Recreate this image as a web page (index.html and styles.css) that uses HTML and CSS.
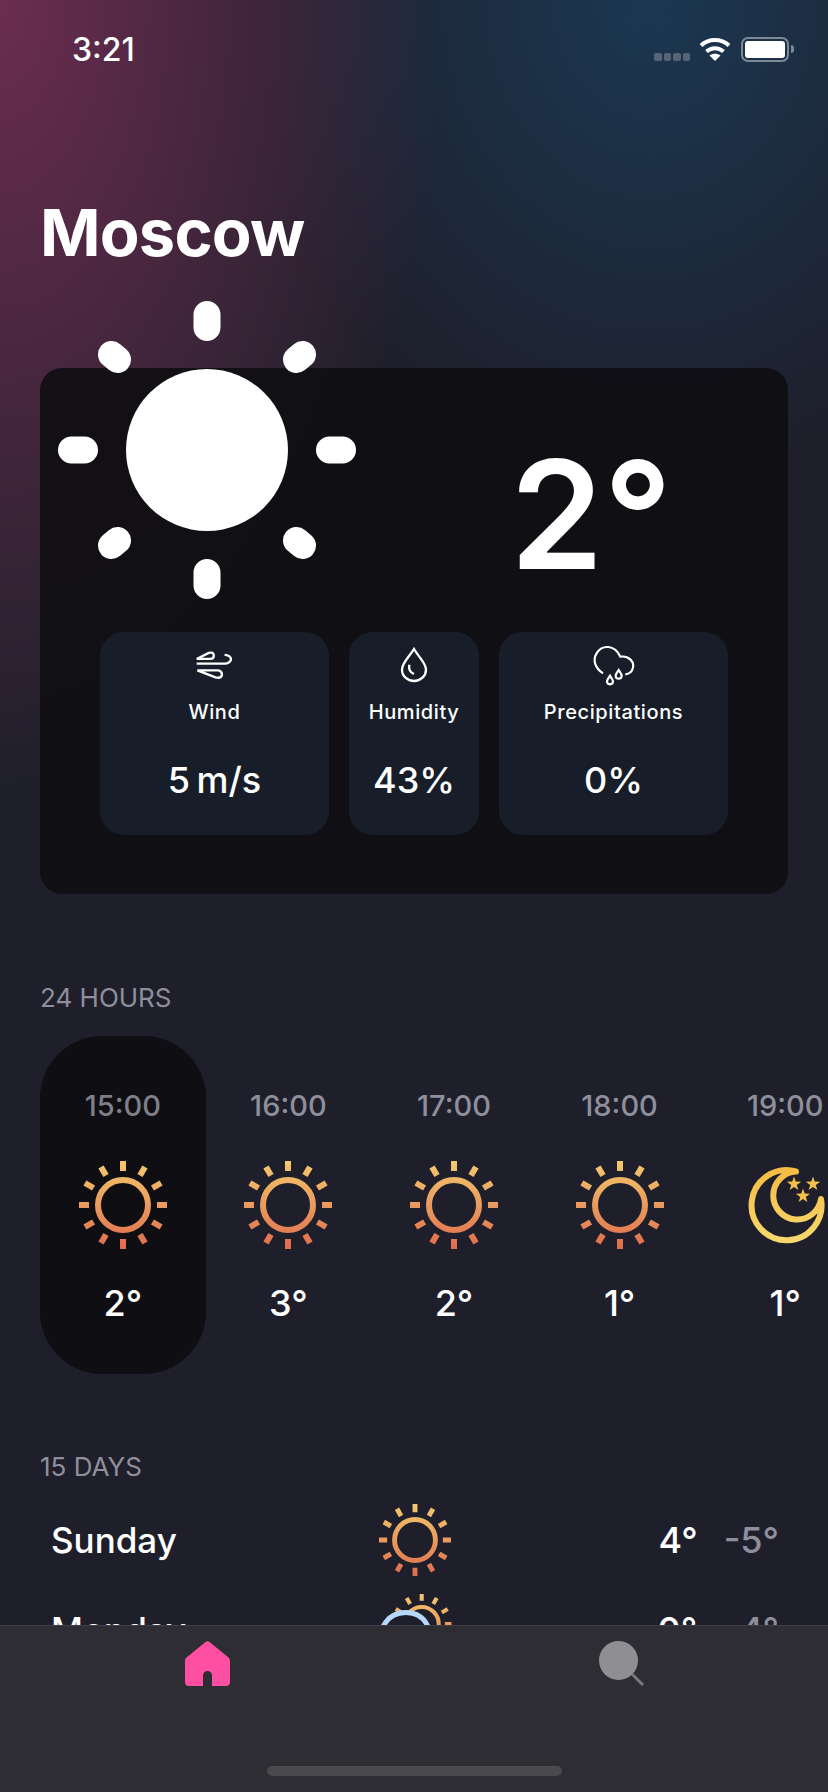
FILE: index.html
```html
<!DOCTYPE html>
<html lang="en">
<head>
    <meta charset="UTF-8">
    <meta name="viewport" content="width=device-width, initial-scale=1.0">
    <title>Moscow</title>
    <link rel="stylesheet" href="styles.css">
</head>
<body>
    <svg class="defs" width="0" height="0">
        <defs>
            <linearGradient id="sun-grad" gradientUnits="userSpaceOnUse" x1="0" y1="0" x2="0" y2="88">
                <stop offset="0" stop-color="#f3c96d"/>
                <stop offset="1" stop-color="#e06c4e"/>
            </linearGradient>
            <linearGradient id="moon-grad" gradientUnits="userSpaceOnUse" x1="0" y1="0" x2="0" y2="76">
                <stop offset="0" stop-color="#f5bb42"/>
                <stop offset="1" stop-color="#f6d86f"/>
            </linearGradient>
            <symbol id="sun" viewBox="0 0 88 88">
                <circle cx="44" cy="44" r="25" fill="none" stroke="url(#sun-grad)" stroke-width="6"/>
                <path fill="none" stroke="url(#sun-grad)" stroke-width="6" d="M44 10V0M61 14.56L66 5.89M73.44 27L82.11 22M78 44H88M73.44 61L82.11 66M61 73.44L66 82.11M44 78V88M27 73.44L22 82.11M14.56 61L5.89 66M10 44H0M14.56 27L5.89 22M27 14.56L22 5.89"/>
            </symbol>
        </defs>
    </svg>

    <div class="screen">
        <div class="content">
            <div class="status">
                <span class="time">3:21</span>
                <div class="status-icons">
                    <div class="signal"><i></i><i></i><i></i><i></i></div>
                    <svg width="32" height="24" viewBox="0 0 32 24">
                        <path fill="none" stroke="#fff" stroke-width="4" d="M2 8.5C10 1.2 22 1.2 30 8.5"/>
                        <path fill="none" stroke="#fff" stroke-width="4" d="M7.5 14.5C12.5 10 19.5 10 24.5 14.5"/>
                        <path fill="#fff" d="M16 24L10.5 18.5C13.5 16 18.5 16 21.5 18.5Z"/>
                    </svg>
                    <div class="battery"><div class="battery-fill"></div></div>
                    <div class="battery-nub"></div>
                </div>
            </div>

            <h1 class="city">Moscow</h1>

            <div class="hero">
                <div class="hero-top">
                    <svg class="big-sun" width="300" height="300" viewBox="0 0 300 300">
                        <circle cx="150" cy="150" r="81" fill="#fff"/>
                        <path fill="none" stroke="#fff" stroke-width="27" stroke-linecap="round" d="M150 14.5V27.5M150 272.5V285.5M14.5 150H27.5M272.5 150H285.5M54.5 54.5L60.5 59.5M245.5 54.5L239.5 59.5M54.5 245.5L60.5 240.5M245.5 245.5L239.5 240.5"/>
                    </svg>
                    <div class="big-temp">2°</div>
                </div>
                <div class="tiles">
                    <div class="tile tile-wide">
                        <div class="tile-icon">
                            <svg width="37" height="30" viewBox="80 62 110 88" fill="none" stroke="#fff" stroke-width="7">
                                <path d="M82 88L118 70Q132 66 133 78Q133 88 122 88H82"/>
                                <path d="M82 102H168Q184 98 184 88Q182 77 165 76"/>
                                <path d="M84 122L138 143Q154 147 157 136Q158 124 145 122H84"/>
                            </svg>
                        </div>
                        <div class="tile-label">Wind</div>
                        <div class="tile-value">5 m/s</div>
                    </div>
                    <div class="tile tile-narrow">
                        <div class="tile-icon">
                            <svg width="28" height="36" viewBox="60 52 84 108" fill="none" stroke="#fff" stroke-width="7">
                                <path d="M102 58C85 85 66 100 66 120A35 33 0 0 0 138 120C138 100 118 85 102 58Z"/>
                                <path d="M88 105Q84 125 102 133"/>
                            </svg>
                        </div>
                        <div class="tile-label">Humidity</div>
                        <div class="tile-value">43%</div>
                    </div>
                    <div class="tile tile-wide">
                        <div class="tile-icon">
                            <svg width="42" height="42" viewBox="638 42 126 126" fill="none" stroke="#fff" stroke-width="6.5">
                                <path d="M668 130C645 115 635 90 650 68C665 45 702 42 720 80C745 76 762 95 758 112C755 128 745 132 735 133"/>
                                <path d="M689 137C683 146 680 150 680 154A9 9 0 0 0 698 154C698 150 695 146 689 137Z"/>
                                <path d="M715 120C709 129 706 133 706 137A9 9 0 0 0 724 137C724 133 721 129 715 120Z"/>
                            </svg>
                        </div>
                        <div class="tile-label">Precipitations</div>
                        <div class="tile-value">0%</div>
                    </div>
                </div>
            </div>

            <div class="section-title first">24 HOURS</div>
            <div class="hours">
                <div class="hour now">
                    <div class="hour-time">15:00</div>
                    <svg class="hour-icon"><use href="#sun"/></svg>
                    <div class="hour-temp">2°</div>
                </div>
                <div class="hour">
                    <div class="hour-time">16:00</div>
                    <svg class="hour-icon"><use href="#sun"/></svg>
                    <div class="hour-temp">3°</div>
                </div>
                <div class="hour">
                    <div class="hour-time">17:00</div>
                    <svg class="hour-icon"><use href="#sun"/></svg>
                    <div class="hour-temp">2°</div>
                </div>
                <div class="hour">
                    <div class="hour-time">18:00</div>
                    <svg class="hour-icon"><use href="#sun"/></svg>
                    <div class="hour-temp">1°</div>
                </div>
                <div class="hour">
                    <div class="hour-time">19:00</div>
                    <svg class="hour-icon" viewBox="-5 -6 88 88" fill="none">
                        <path stroke="url(#moon-grad)" stroke-width="6" stroke-linejoin="round" d="M50 4.5A35 35 0 1 0 75 32A24 24 0 1 1 50 4.5Z"/>
                        <g fill="#f5bf4c">
                            <polygon transform="translate(48 17) scale(1.15)" points="0,-6.5 1.5,-2.1 6.2,-2 2.4,.8 3.8,5.3 0,2.6 -3.8,5.3 -2.4,.8 -6.2,-2 -1.5,-2.1"/>
                            <polygon transform="translate(67 17) scale(1.15)" points="0,-6.5 1.5,-2.1 6.2,-2 2.4,.8 3.8,5.3 0,2.6 -3.8,5.3 -2.4,.8 -6.2,-2 -1.5,-2.1"/>
                            <polygon transform="translate(57 29) scale(1.15)" points="0,-6.5 1.5,-2.1 6.2,-2 2.4,.8 3.8,5.3 0,2.6 -3.8,5.3 -2.4,.8 -6.2,-2 -1.5,-2.1"/>
                        </g>
                    </svg>
                    <div class="hour-temp">1°</div>
                </div>
            </div>

            <div class="section-title second">15 DAYS</div>
            <div class="day">
                <div class="day-name">Sunday</div>
                <svg class="day-icon"><use href="#sun"/></svg>
                <div class="day-temps"><span>4°</span><span class="low">-5°</span></div>
            </div>
            <div class="day">
                <div class="day-name">Monday</div>
                <svg class="day-icon" viewBox="0 0 72 72">
                    <svg x="12.7" y="0" width="60" height="60" viewBox="0 0 88 88"><use href="#sun" width="88" height="88"/></svg>
                    <path fill="#1e1f2b" stroke="#b5d8fb" stroke-width="5" d="M4 60C-4 40 6 18.5 27 18.5C48 18.5 56 40 50 60Z"/>
                </svg>
                <div class="day-temps"><span>0°</span><span class="low">-4°</span></div>
            </div>
        </div>

        <div class="tabbar">
            <div class="tabs">
                <svg width="45" height="45" viewBox="0 0 45 45">
                    <path fill="#ff4fa3" d="M20.5 1Q22.5 -.5 24.5 1L43.5 16.5Q45 17.8 45 20V41Q45 45 41 45H27V34.5A4.5 4.5 0 0 0 18 34.5V45H4Q0 45 0 41V20Q0 17.8 1.5 16.5Z"/>
                </svg>
                <svg width="45" height="45" viewBox="0 0 45 45">
                    <circle cx="19.5" cy="19.5" r="19.5" fill="#8e8e93"/>
                    <path stroke="#78787d" stroke-width="3" d="M33 33L44 44"/>
                </svg>
            </div>
            <div class="home-bar"></div>
        </div>
    </div>
</body>
</html>
```

FILE: styles.css
```css
* {
    box-sizing: border-box;
}
body {
    margin: 0;
    font-family: Inter, "Liberation Sans", sans-serif;
    color: #fff;
    background-color: #1e1f2b;
}
.defs {
    display: block;
    height: 0;
}
.screen {
    width: 828px;
    height: 1792px;
    overflow: hidden;
    display: flex;
    flex-direction: column;
    background:
        radial-gradient(ellipse 440px 800px at 0 0, #6c2d50, rgba(108, 45, 80, 0)),
        radial-gradient(ellipse 400px 480px at 650px 0, #1b3852, rgba(27, 56, 82, 0)),
        #1e1f2b;
}
.content {
    height: 1625px;
    overflow: hidden;
    flex-shrink: 0;
}

/* status bar */
.status {
    height: 98px;
    display: flex;
    justify-content: space-between;
    align-items: center;
    padding-left: 72px;
}
.time {
    font-size: 32px;
    font-weight: 500;
}
.status-icons {
    display: flex;
    align-items: flex-start;
    padding-right: 34px;
    height: 25px;
}
.signal {
    display: flex;
    gap: 2px;
    margin-top: 16px;
    margin-right: 9px;
}
.signal i {
    width: 7.5px;
    height: 8px;
    border-radius: 2px;
    background-color: #566476;
}
.battery {
    width: 48px;
    height: 25px;
    margin-left: 10px;
    padding: 2px;
    border: 2px solid #7b8898;
    border-radius: 7px;
}
.battery-fill {
    height: 100%;
    background-color: #fff;
    border-radius: 3px;
}
.battery-nub {
    width: 3px;
    height: 8px;
    margin: 8.5px 0 0 2px;
    background-color: #7b8898;
    border-radius: 0 3px 3px 0;
}

.city {
    margin: 95px 0 0 40px;
    height: 80px;
    font-size: 65px;
    line-height: 80px;
    font-weight: 700;
    letter-spacing: -0.8px;
}

/* main card */
.hero {
    margin: 95px 40px 0;
    height: 526px;
    background-color: rgba(14, 14, 18, 0.9);
    border-radius: 22px;
}
.hero-top {
    height: 264px;
    display: flex;
    align-items: flex-start;
}
.big-sun {
    flex-shrink: 0;
    margin: -68px 0 0 17px;
}
.big-temp {
    margin: 62px 0 0 153px;
    font-size: 150px;
    line-height: 170px;
    font-weight: 600;
}
.tiles {
    display: flex;
    gap: 20px;
    padding-left: 60px;
}
.tile {
    height: 203px;
    padding-top: 13px;
    background-color: #171e29;
    border-radius: 24px;
    display: flex;
    flex-direction: column;
    align-items: center;
    text-align: center;
}
.tile-wide {
    width: 229px;
}
.tile-narrow {
    width: 130px;
}
.tile-icon {
    height: 40px;
    display: flex;
    align-items: center;
}
.tile-label {
    margin-top: 15px;
    font-size: 20px;
    line-height: 24px;
    font-weight: 500;
    letter-spacing: 0.6px;
}
.tile-value {
    margin-top: 36px;
    font-size: 36px;
    line-height: 40px;
    font-weight: 500;
    word-spacing: -3px;
}

.section-title {
    margin-left: 40px;
    height: 30px;
    font-size: 26px;
    line-height: 30px;
    color: #8f8f9b;
}
.section-title.first {
    margin-top: 89px;
}
.section-title.second {
    margin-top: 78px;
}

/* hourly strip */
.hours {
    display: flex;
    margin: 23px 0 0 40px;
    width: 900px;
}
.hour {
    flex: 0 0 165.6px;
    height: 338px;
    padding-top: 53px;
    display: flex;
    flex-direction: column;
    align-items: center;
    border-radius: 62px;
}
.hour.now {
    background-color: #0e0e13;
}
.hour-time {
    font-size: 29px;
    line-height: 34px;
    font-weight: 500;
    color: #8f8f9b;
}
.now .hour-time {
    color: #7f7f87;
}
.hour-icon {
    width: 88px;
    height: 88px;
    margin-top: 38px;
}
.hour-temp {
    margin-top: 34px;
    font-size: 36px;
    line-height: 40px;
    font-weight: 500;
}

/* daily rows */
.day {
    display: grid;
    grid-template-columns: 1fr 72px 1fr;
    align-items: center;
    height: 90px;
    padding: 0 49px 0 51px;
}
.section-title.second + .day {
    margin-top: 13px;
}
.day-name {
    font-size: 35px;
    font-weight: 500;
}
.day-icon {
    width: 72px;
    height: 72px;
    overflow: visible;
}
.day-temps {
    display: flex;
    justify-content: flex-end;
    gap: 26px;
    font-size: 36px;
    font-weight: 500;
}
.low {
    color: #8f8f9b;
}

/* tab bar */
.tabbar {
    flex: 1;
    display: flex;
    flex-direction: column;
    align-items: center;
    background-color: #2d2d33;
    border-top: 1px solid #3f3f47;
    padding: 15px 0 16px;
}
.tabs {
    width: 100%;
    display: grid;
    grid-template-columns: 1fr 1fr;
    justify-items: center;
}
.home-bar {
    width: 295px;
    height: 10px;
    margin-top: auto;
    background-color: #4a4a4d;
    border-radius: 5px;
}
```
